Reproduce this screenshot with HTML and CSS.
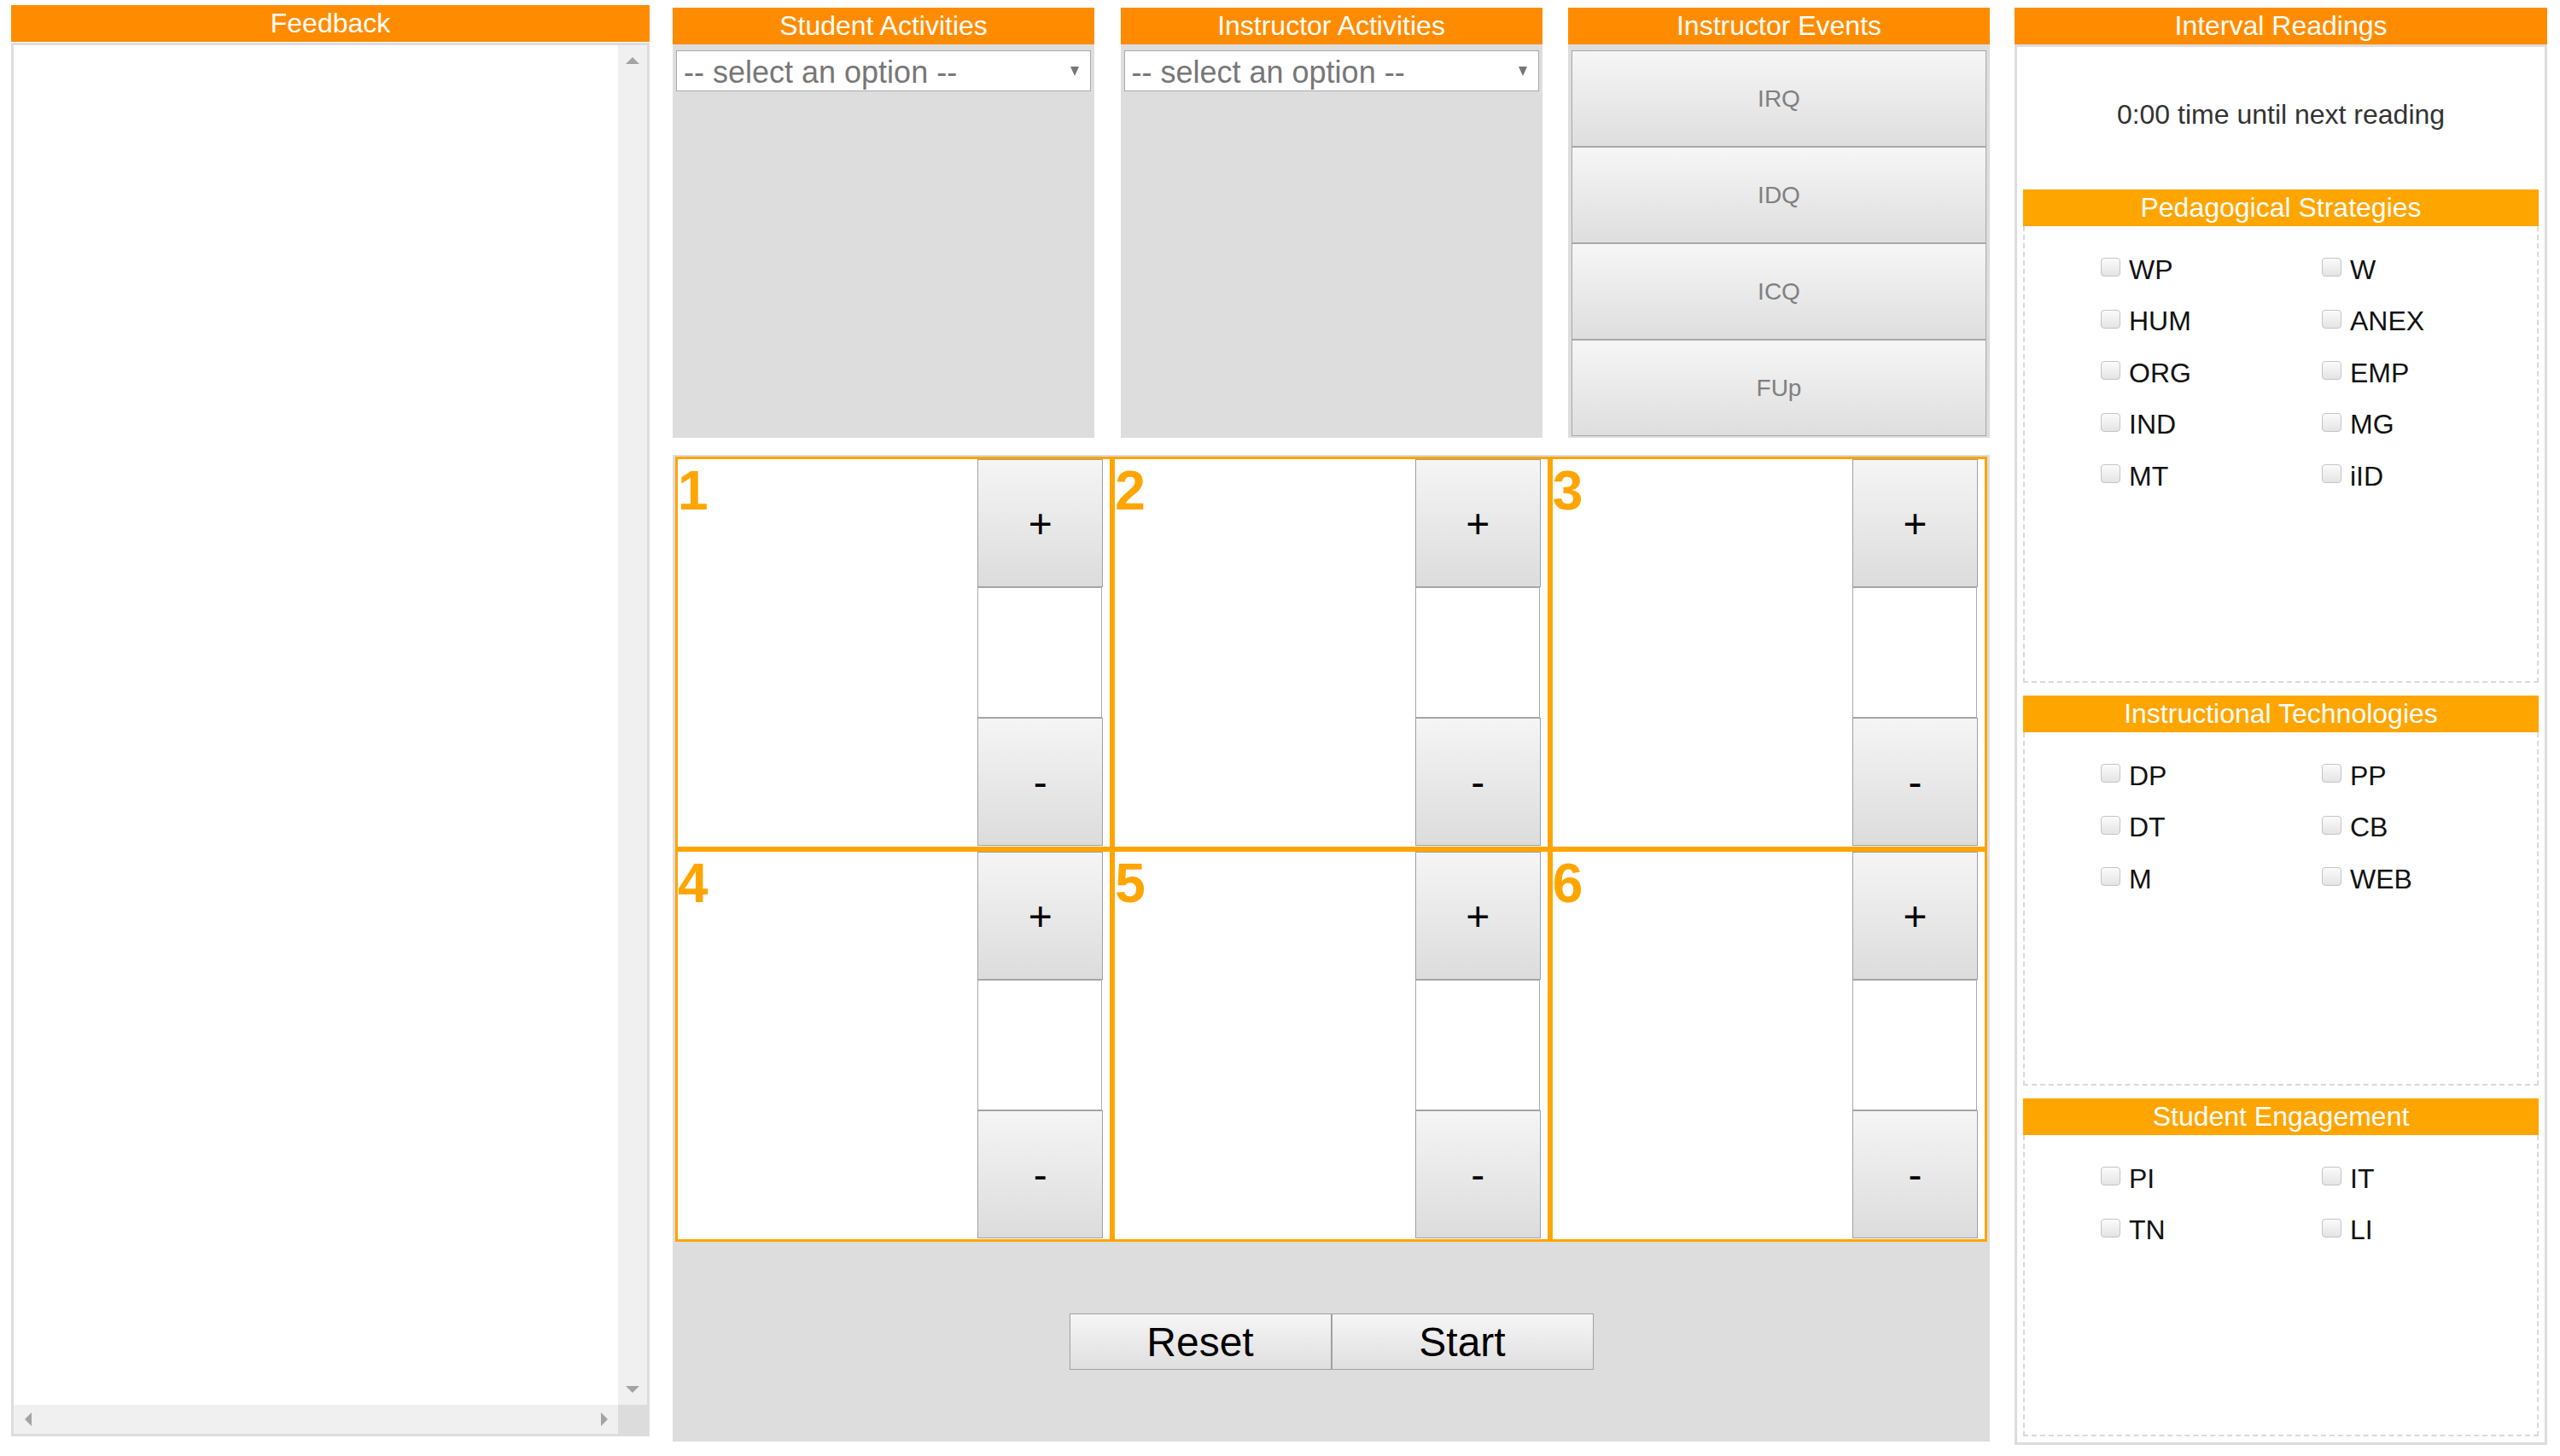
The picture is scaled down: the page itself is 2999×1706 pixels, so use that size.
FILE: index.html
```html
<!DOCTYPE html>
<html lang="en">
<head>
<meta charset="utf-8">
<title>Classroom Observation</title>
<link rel="stylesheet" href="styles.css">
</head>
<body>
<div class="page">
  <section class="feedback">
    <h2 class="panel-title">Feedback</h2>
    <div class="fb-box">
      <div class="fb-content"></div>
      <div class="vscroll"><span class="arrow up"></span><span class="arrow down"></span></div>
      <div class="hscroll"><span class="arrow left"></span><span class="arrow right"></span></div>
      <div class="corner"></div>
    </div>
  </section>

  <main class="center">
    <div class="top-row">
      <section class="panel">
        <h2 class="panel-title">Student Activities</h2>
        <div class="panel-body">
          <div class="select"><span>-- select an option --</span><span class="caret"></span></div>
        </div>
      </section>
      <section class="panel">
        <h2 class="panel-title">Instructor Activities</h2>
        <div class="panel-body">
          <div class="select"><span>-- select an option --</span><span class="caret"></span></div>
        </div>
      </section>
      <section class="panel">
        <h2 class="panel-title">Instructor Events</h2>
        <div class="panel-body events">
          <button class="event-btn">IRQ</button>
          <button class="event-btn">IDQ</button>
          <button class="event-btn">ICQ</button>
          <button class="event-btn">FUp</button>
        </div>
      </section>
    </div>

    <div class="board">
      <div class="grid">
        <div class="cell"><h1 class="num">1</h1><div class="counter"><button class="step">+</button><div class="count"></div><button class="step">-</button></div></div>
        <div class="cell"><h1 class="num">2</h1><div class="counter"><button class="step">+</button><div class="count"></div><button class="step">-</button></div></div>
        <div class="cell"><h1 class="num">3</h1><div class="counter"><button class="step">+</button><div class="count"></div><button class="step">-</button></div></div>
        <div class="cell"><h1 class="num">4</h1><div class="counter"><button class="step">+</button><div class="count"></div><button class="step">-</button></div></div>
        <div class="cell"><h1 class="num">5</h1><div class="counter"><button class="step">+</button><div class="count"></div><button class="step">-</button></div></div>
        <div class="cell"><h1 class="num">6</h1><div class="counter"><button class="step">+</button><div class="count"></div><button class="step">-</button></div></div>
      </div>
      <div class="actions">
        <button class="action">Reset</button><button class="action">Start</button>
      </div>
    </div>
  </main>

  <aside class="readings">
    <h2 class="panel-title">Interval Readings</h2>
    <div class="readings-body">
      <div class="timer">0:00 time until next reading</div>

      <h3 class="sub-title">Pedagogical Strategies</h3>
      <div class="check-box ped">
        <label class="opt"><input type="checkbox"><span>WP</span></label>
        <label class="opt"><input type="checkbox"><span>W</span></label>
        <label class="opt"><input type="checkbox"><span>HUM</span></label>
        <label class="opt"><input type="checkbox"><span>ANEX</span></label>
        <label class="opt"><input type="checkbox"><span>ORG</span></label>
        <label class="opt"><input type="checkbox"><span>EMP</span></label>
        <label class="opt"><input type="checkbox"><span>IND</span></label>
        <label class="opt"><input type="checkbox"><span>MG</span></label>
        <label class="opt"><input type="checkbox"><span>MT</span></label>
        <label class="opt"><input type="checkbox"><span>iID</span></label>
      </div>

      <h3 class="sub-title">Instructional Technologies</h3>
      <div class="check-box tech">
        <label class="opt"><input type="checkbox"><span>DP</span></label>
        <label class="opt"><input type="checkbox"><span>PP</span></label>
        <label class="opt"><input type="checkbox"><span>DT</span></label>
        <label class="opt"><input type="checkbox"><span>CB</span></label>
        <label class="opt"><input type="checkbox"><span>M</span></label>
        <label class="opt"><input type="checkbox"><span>WEB</span></label>
      </div>

      <h3 class="sub-title">Student Engagement</h3>
      <div class="check-box eng">
        <label class="opt"><input type="checkbox"><span>PI</span></label>
        <label class="opt"><input type="checkbox"><span>IT</span></label>
        <label class="opt"><input type="checkbox"><span>TN</span></label>
        <label class="opt"><input type="checkbox"><span>LI</span></label>
      </div>
    </div>
  </aside>
</div>
</body>
</html>
```

FILE: styles.css
```css
* { box-sizing: border-box; }

html, body {
  margin: 0;
  padding: 0;
  background: #ffffff;
  font-family: "Liberation Sans", Arial, sans-serif;
}

.page {
  display: flex;
  align-items: flex-start;
  padding-left: 13px;
}

.panel-title {
  margin: 0;
  height: 43px;
  line-height: 43px;
  background: #ff8c00;
  color: #ffffff;
  font-size: 32px;
  font-weight: normal;
  text-align: center;
}

/* ---------- Feedback ---------- */
.feedback {
  width: 748px;
  margin-top: 6px;
}

.fb-box {
  margin-top: 1px;
  height: 1633px;
  border: 3px solid #dddddd;
  display: grid;
  grid-template-columns: 1fr 34px;
  grid-template-rows: 1fr 34px;
  background: #ffffff;
}

.vscroll {
  background: #f0f0f0;
  display: flex;
  flex-direction: column;
  align-items: center;
  justify-content: space-between;
  padding: 14px 0;
}

.hscroll {
  background: #f0f0f0;
  display: flex;
  align-items: center;
  justify-content: space-between;
  padding: 0 12px 0 13px;
}

.corner { background: #dcdcdc; }

.arrow { display: block; width: 0; height: 0; }
.arrow.up {
  border-left: 8px solid transparent;
  border-right: 8px solid transparent;
  border-bottom: 8px solid #a3a3a3;
}
.arrow.down {
  border-left: 8px solid transparent;
  border-right: 8px solid transparent;
  border-top: 8px solid #a3a3a3;
}
.arrow.left {
  border-top: 8px solid transparent;
  border-bottom: 8px solid transparent;
  border-right: 8px solid #a3a3a3;
}
.arrow.right {
  border-top: 8px solid transparent;
  border-bottom: 8px solid transparent;
  border-left: 8px solid #a3a3a3;
}

/* ---------- Center ---------- */
.center {
  width: 1543px;
  margin-left: 27px;
  margin-top: 9px;
}

.top-row {
  display: flex;
  justify-content: space-between;
  height: 504px;
}

.panel {
  width: 494px;
  display: flex;
  flex-direction: column;
}

.panel-body {
  flex: 1;
  background: #dddddd;
  padding: 7px 4px 2px;
}

.select {
  height: 48px;
  background: #ffffff;
  border: 1px solid #a9a9a9;
  display: flex;
  align-items: center;
  justify-content: space-between;
  padding: 3px 13px 0 8px;
  font-size: 36px;
  color: #777777;
}

.caret {
  width: 0;
  height: 0;
  margin-bottom: 3px;
  border-left: 5px solid transparent;
  border-right: 5px solid transparent;
  border-top: 11px solid #777777;
}

.events {
  display: flex;
  flex-direction: column;
}

.event-btn {
  height: 113px;
  width: 100%;
  margin: 0;
  border: 1px solid #a8a8a8;
  background: linear-gradient(#f6f6f6, #dedede);
  font-family: "Liberation Sans", Arial, sans-serif;
  font-size: 28px;
  color: #808080;
}

.board {
  margin-top: 20px;
  height: 1156px;
  background: #dddddd;
  padding: 2px 3px 0;
  display: flex;
  flex-direction: column;
}

.grid {
  display: grid;
  grid-template-columns: repeat(3, 1fr);
  grid-template-rows: 460px 460px;
}

.cell {
  border: 3px solid #ffa500;
  background: #ffffff;
  display: flex;
  justify-content: space-between;
  align-items: flex-start;
  padding-right: 8px;
}

.num {
  margin: 0;
  font-size: 64px;
  font-weight: bold;
  color: #ffa500;
  line-height: normal;
}

.counter {
  width: 147px;
  display: flex;
  flex-direction: column;
}

.step {
  height: 150px;
  width: 147px;
  margin: 0;
  border: 1px solid #a0a0a0;
  background: linear-gradient(#f5f5f5, #dcdcdc);
  font-family: "Liberation Sans", Arial, sans-serif;
  font-size: 48px;
  color: #000000;
  padding: 0;
}

.count {
  height: 153px;
  width: 146px;
  background: #ffffff;
  border: 1px solid #ababab;
}

.actions {
  flex: 1;
  display: flex;
  align-items: center;
  justify-content: center;
}

.action {
  width: 307px;
  height: 66px;
  margin: 0;
  border: 1px solid #a0a0a0;
  background: linear-gradient(#f6f6f6, #dfdfdf);
  font-family: "Liberation Sans", Arial, sans-serif;
  font-size: 48px;
  color: #000000;
  padding: 0;
}

/* ---------- Interval Readings ---------- */
.readings {
  width: 624px;
  margin-left: 29px;
  margin-top: 9px;
}

.readings-body {
  border: 3px solid #dddddd;
  padding: 0 7px 7px;
  background: #ffffff;
}

.timer {
  height: 158px;
  margin-bottom: 9px;
  display: flex;
  align-items: center;
  justify-content: center;
  font-size: 32px;
  color: #333333;
}

.sub-title {
  margin: 0;
  height: 43px;
  line-height: 43px;
  background: #ffa500;
  color: #ffffff;
  font-size: 32px;
  font-weight: normal;
  text-align: center;
}

.check-box {
  border: 2px dashed #dadada;
  border-top: none;
  padding: 21px 0 0 89px;
  display: grid;
  grid-template-columns: 259px 259px;
  grid-auto-rows: 60.5px;
  align-content: start;
  margin-bottom: 15px;
}

.check-box.ped { height: 535px; }
.check-box.tech { height: 414px; }
.check-box.eng { height: 353px; margin-bottom: 0; }

.opt {
  display: flex;
  align-items: center;
  gap: 10px;
  font-size: 32px;
  color: #111111;
}

.opt input {
  appearance: none;
  -webkit-appearance: none;
  margin: 0 0 6px 0;
  width: 23px;
  height: 22px;
  border: 1px solid #c4c4c4;
  border-radius: 4px;
  background: linear-gradient(#fbfbfb, #e4e4e4);
}
```
